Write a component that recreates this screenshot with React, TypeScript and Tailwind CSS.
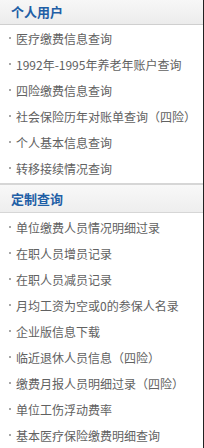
import React from "react"

const personal = [
  "医疗缴费信息查询",
  "1992年-1995年养老年账户查询",
  "四险缴费信息查询",
  "社会保险历年对账单查询（四险）",
  "个人基本信息查询",
  "转移接续情况查询",
]

const custom = [
  "单位缴费人员情况明细过录",
  "在职人员增员记录",
  "在职人员减员记录",
  "月均工资为空或0的参保人名录",
  "企业版信息下载",
  "临近退休人员信息（四险）",
  "缴费月报人员明细过录（四险）",
  "单位工伤浮动费率",
  "基本医疗保险缴费明细查询",
]

function Item({ label }: { label: string }) {
  return (
    <li className="flex h-[26px] items-center pl-[9px] text-[12px] text-[#616161] whitespace-nowrap [text-spacing-trim:space-all]">
      <span className="relative -top-[1px] mr-[5px] h-[2px] w-[2px] shrink-0 rounded-full bg-[#8a8a8a]" />
      {label}
    </li>
  )
}

export default function App() {
  return (
    <div
      lang="zh-CN"
      className="h-[448px] w-[204px] overflow-hidden border-r border-[#222] bg-white"
      style={{ fontFamily: '"Noto Sans CJK SC", "Liberation Sans", sans-serif' }}
    >
      {/* 个人用户 */}
      <div className="flex h-[25px] items-center border-b border-[#cfcfcf] bg-gradient-to-b from-[#f7f7f7] to-[#ececec] pl-[11px] text-[13px] font-bold text-[#1f5fa6]">
        个人用户
      </div>
      <ul className="pt-[1px]">
        {personal.map((t) => (
          <Item key={t} label={t} />
        ))}
      </ul>

      {/* 定制查询 */}
      <div className="mt-[1px] flex h-[30px] items-center border-t-2 border-b border-t-[#d6d6d6] border-b-[#d6d6d6] bg-gradient-to-b from-[#f8f8f8] to-[#eeeeee] pl-[11px] text-[13px] font-bold text-[#1f5fa6]">
        定制查询
      </div>
      <ul className="pt-[2px]">
        {custom.map((t) => (
          <Item key={t} label={t} />
        ))}
      </ul>
    </div>
  )
}
